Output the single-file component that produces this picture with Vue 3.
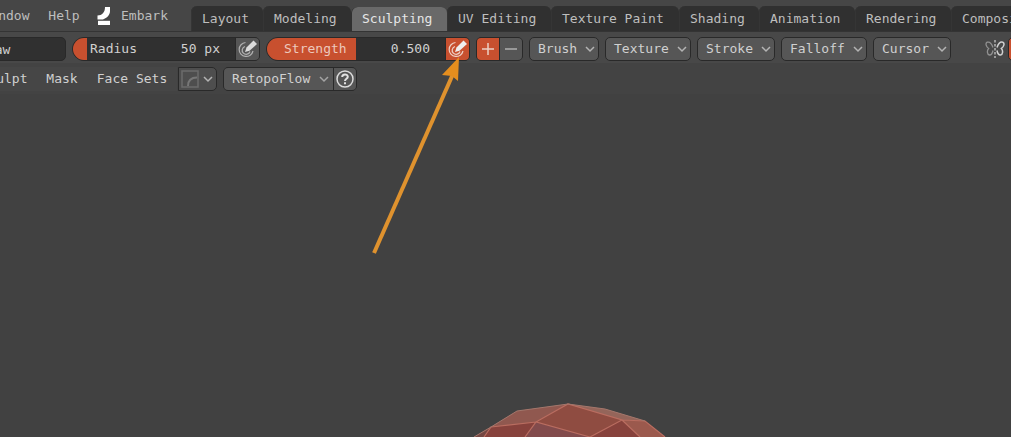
<script setup>
import { ref } from 'vue'

const menus = ['Window', 'Help']
const tabs = ['Layout', 'Modeling', 'Sculpting', 'UV Editing', 'Texture Paint', 'Shading', 'Animation', 'Rendering', 'Compositing']
const activeTab = ref('Sculpting')
const popovers = ['Brush', 'Texture', 'Stroke', 'Falloff', 'Cursor']
const modeMenus = ['Sculpt', 'Mask', 'Face Sets']

const brush = ref('Draw')
const radius = ref(50)
const strength = ref(0.5)
const direction = ref('add')

// One character cell of the interface font is 8px wide.
const cells = (label, extra) => ({ width: `${label.length * 8 + extra}px` })
</script>

<template>
  <div class="app">
    <header class="topbar">
      <nav class="menus" aria-label="Main menu">
        <button v-for="m in menus" :key="m" class="menu" type="button" :style="cells(m, 18)">{{ m }}</button>
        <button class="menu embark" type="button">
          <svg width="16" height="20" viewBox="0 0 16 20" aria-hidden="true">
            <path d="M9 1H14V5C14 9 11 12 7 13.5H1.500V9.500C6 9.500 9 6.500 9 1Z" fill="#fff" />
            <path d="M2 14.800H14V19H2Z" fill="#fff" />
          </svg>
          <span>Embark</span>
        </button>
      </nav>
      <div class="tabs" role="tablist" aria-label="Workspaces">
        <button
          v-for="t in tabs" :key="t" class="tab" type="button" role="tab"
          :class="{ active: t === activeTab }" :aria-selected="t === activeTab"
          :style="cells(t, 24)" @click="activeTab = t"
        >{{ t }}</button>
      </div>
    </header>

    <div class="toolbar tools" role="toolbar" aria-label="Brush settings">
      <input v-model="brush" class="brush-name" type="text" aria-label="Brush name">

      <div class="group">
        <div class="slider radius">
          <input id="radius" v-model.number="radius" type="range" min="0" max="550" :style="{ '--fill': '14px' }">
          <label for="radius">Radius</label>
          <output for="radius">{{ radius }} px</output>
        </div>
        <button class="cell" type="button" aria-label="Radius pressure">
          <svg width="22" height="22" viewBox="0 0 22 22" fill="none" aria-hidden="true">
            <path d="M8.500 4.500A7 7 0 1 0 16 13" stroke="currentColor" stroke-width="1.200" />
            <path d="M8 8.500A4 4 0 1 0 13 13.500" stroke="currentColor" stroke-width="1.300" />
            <path d="M8 14 9.500 9.500 16.500 2.500 20 6 12.500 12.800Z" fill="#dcdcdc" />
          </svg>
        </button>
      </div>

      <div class="group">
        <div class="slider strength">
          <input id="strength" v-model.number="strength" type="range" min="0" max="1" step="0.001" :style="{ '--fill': strength * 100 + '%' }">
          <label for="strength">Strength</label>
          <output for="strength">{{ strength.toFixed(3) }}</output>
        </div>
        <button class="cell on" type="button" aria-label="Strength pressure" aria-pressed="true">
          <svg width="22" height="22" viewBox="0 0 22 22" fill="none" aria-hidden="true">
            <path d="M8.500 4.500A7 7 0 1 0 16 13" stroke="currentColor" stroke-width="1.200" />
            <path d="M8 8.500A4 4 0 1 0 13 13.500" stroke="currentColor" stroke-width="1.300" />
            <path d="M8 14 9.500 9.500 16.500 2.500 20 6 12.500 12.800Z" fill="#eee" />
          </svg>
        </button>
      </div>

      <div class="group direction">
        <button class="cell" type="button" aria-label="Add" :class="{ on: direction === 'add' }" @click="direction = 'add'">
          <svg width="22" height="22" viewBox="0 0 22 22" aria-hidden="true"><path d="M5 11H17M11 5V17" stroke="currentColor" stroke-width="1.500" /></svg>
        </button>
        <button class="cell" type="button" aria-label="Subtract" :class="{ on: direction === 'subtract' }" @click="direction = 'subtract'">
          <svg width="22" height="22" viewBox="0 0 22 22" aria-hidden="true"><path d="M5 11H17" stroke="currentColor" stroke-width="1.500" /></svg>
        </button>
      </div>

      <button v-for="p in popovers" :key="p" class="popover" type="button" aria-haspopup="true" :style="cells(p, 30)">
        <span>{{ p }}</span>
        <svg width="10" height="8" viewBox="0 0 10 8" aria-hidden="true"><path d="M1 2 5 6 9 2" fill="none" stroke="#b4b4b4" stroke-width="1.500" /></svg>
      </button>

      <div class="symmetry">
        <svg width="20" height="20" viewBox="0 0 20 20" fill="none" aria-hidden="true">
          <path d="M8 8.500C6.800 5 4.500 2.500 2.200 3.200C0 4.200 1.200 8 3.600 9.500C1.800 11.500 2 15.500 4.500 16C7 16.200 7.600 13.500 8 11.500" stroke="#919191" stroke-width="1.300" />
          <path d="M12 8.500C13.200 5 15.500 2.500 17.800 3.200C20 4.200 18.800 8 16.400 9.500C18.200 11.500 18 15.500 15.500 16C13 16.200 12.400 13.500 12 11.500" stroke="#d0d0d0" stroke-width="1.500" />
          <path d="M10 1V19" stroke="#d0d0d0" stroke-width="1.200" stroke-dasharray="2.500 1.500" />
        </svg>
        <button class="axis" type="button" aria-label="Mirror X"></button>
      </div>
    </div>

    <div class="toolbar modes" role="toolbar" aria-label="Sculpt menus">
      <button v-for="m in modeMenus" :key="m" class="menu" type="button" :style="cells(m, 18)">{{ m }}</button>
      <button class="popover falloff" type="button" aria-label="Automasking" aria-haspopup="true">
        <svg width="20" height="20" viewBox="0 0 20 20" fill="none" aria-hidden="true">
          <path d="M2 2H18V18H2Z" stroke="#6c6c6c" stroke-width="1.500" />
          <path d="M8 17C8 11 11 8.500 17 8.500" stroke="#777" stroke-width="2" />
        </svg>
        <svg width="10" height="8" viewBox="0 0 10 8" aria-hidden="true"><path d="M1 2 5 6 9 2" fill="none" stroke="#b4b4b4" stroke-width="1.500" /></svg>
      </button>
      <div class="group retopo">
        <button class="cell wide" type="button" aria-haspopup="true">
          <span>RetopoFlow</span>
          <svg width="10" height="8" viewBox="0 0 10 8" aria-hidden="true"><path d="M1 2 5 6 9 2" fill="none" stroke="#a4a4a4" stroke-width="1.500" /></svg>
        </button>
        <button class="cell help" type="button" aria-label="Help">
          <svg width="20" height="20" viewBox="0 0 20 20" fill="none" aria-hidden="true">
            <circle cx="10" cy="10" r="8" stroke="#dcdcdc" stroke-width="1.500" />
            <path d="M7.200 8C7.200 4.600 12.800 4.600 12.800 7.800C12.800 9.800 10 9.800 10 12" stroke="#e2e2e2" stroke-width="2" />
            <path d="M9 13.200H11V15.200H9Z" fill="#e2e2e2" />
          </svg>
        </button>
      </div>
    </div>

    <main class="viewport">
      <svg class="mesh" width="194" height="34" viewBox="473 403 194 34" aria-label="Sculpted mesh">
        <path d="M474 437 491 427 517 411 568 404 605 409 645 421 665 437Z" fill="#87423c" />
        <path d="M491 427 517 411 568 404 536 422Z" fill="#90584f" />
        <path d="M568 404 622 420 590 437 536 422Z" fill="#8f4c41" />
        <path d="M568 404 605 409 645 421 622 420Z" fill="#94655a" />
        <path d="M622 420 645 421 665 437H640Z" fill="#9b594d" />
        <path d="M536 422 590 437H525Z" fill="#824b4c" />
        <path d="M474 437 491 427 484 437Z" fill="#754742" />
        <path d="M484 437 491 427 536 422 568 404 622 420 590 437 536 422 525 437M622 420 640 437M622 420 645 421 665 437" fill="none" stroke="#b96d60" stroke-width="1.200" />
        <path d="M474 437 491 427 517 411 568 404 605 409 645 421" fill="none" stroke="#a2776c" stroke-width="1" />
      </svg>
    </main>

    <svg class="pointer" width="90" height="200" viewBox="371 56 90 200" aria-hidden="true">
      <path d="M374 253 453 74" stroke="#df922e" stroke-width="4" />
      <path d="M459 57 458 81 452 76 442 75Z" fill="#e58e1e" />
    </svg>
  </div>
</template>

<style>
body {
  margin: 0;
  background: #414141;
}
</style>

<style scoped>
.app {
  position: relative;
  display: flex;
  flex-direction: column;
  min-height: 100vh;
  overflow: hidden;
  background: #414141;
  color: #d0d0d0;
  font: 13px/16px "DejaVu Sans Mono", monospace;
}

button,
input {
  box-sizing: border-box;
  margin: 0;
  padding: 0;
  border: 0;
  color: inherit;
  font: inherit;
  white-space: nowrap;
}

button {
  background: none;
}

svg {
  display: block;
  flex: none;
}

.topbar {
  display: flex;
  height: 32px;
  box-sizing: border-box;
  border-bottom: 1px solid #343434;
  background: #464646;
  color: #bebebe;
}

.menus {
  display: flex;
  flex: none;
  width: 218px;
  margin-left: -27px;
}

.menu {
  flex: none;
  text-align: center;
}

.embark {
  display: flex;
  align-items: center;
  gap: 9px;
  margin-left: 7px;
}

.tabs {
  display: flex;
  align-items: flex-end;
}

.tab {
  flex: none;
  height: 25px;
  padding-left: 11px;
  border-radius: 6px 6px 0 0;
  background: #303030;
  box-shadow: inset 1px 0 #353535;
  text-align: left;
}

.tab.active {
  height: 24px;
  background: #696969;
  box-shadow: inset 1px 0 #303030;
  color: #e6e6e6;
}

.toolbar {
  display: flex;
  align-items: center;
  box-sizing: border-box;
}

.tools {
  gap: 6px;
  height: 31px;
  padding-top: 3px;
  background: #484848;
}

.toolbar > * {
  flex: none;
}

.brush-name {
  width: 100px;
  height: 24px;
  margin-left: -34px;
  padding-left: 12px;
  border: 1px solid #292929;
  border-radius: 5px;
  background: #303030;
}

.group {
  display: flex;
  gap: 1px;
  height: 24px;
  box-sizing: border-box;
  border: 1px solid #292929;
  border-radius: 5px;
  background: #292929;
  overflow: hidden;
}

.group:has(.slider) {
  border-radius: 12px 5px 5px 12px;
}

.slider {
  display: grid;
  grid-template-columns: auto 1fr;
  align-items: center;
}

.slider > * {
  grid-row: 1;
}

.slider input {
  grid-column: 1 / -1;
  width: 100%;
  height: 22px;
  appearance: none;
  background: linear-gradient(to right, #c8502f var(--fill), #303030 var(--fill));
}

.slider input::-webkit-slider-thumb {
  appearance: none;
  width: 1px;
  height: 22px;
}

.slider label,
.slider output {
  pointer-events: none;
}

.slider label {
  grid-column: 1;
  padding-left: 17px;
}

.slider output {
  grid-column: 2;
  padding-right: 15px;
  text-align: right;
}

.radius {
  width: 162px;
}

.strength {
  width: 178px;
}

.strength label {
  color: #edc8bc;
}

.cell {
  display: flex;
  align-items: center;
  justify-content: center;
  width: 23px;
  height: 22px;
  background: #565656;
  color: #b0b0b0;
}

.cell.on {
  background: #c8502f;
  color: #edd0c5;
}

.direction .cell {
  width: 22px;
}

.direction {
  width: 47px;
}

.popover {
  display: flex;
  align-items: center;
  justify-content: space-between;
  height: 24px;
  padding: 0 3px 0 8px;
  border: 1px solid #292929;
  border-radius: 5px;
  background: #565656;
}

.symmetry {
  display: flex;
  gap: 3px;
  align-items: center;
  margin-left: 28px;
}

.axis {
  width: 24px;
  height: 24px;
  border: 1px solid #292929;
  border-radius: 5px 0 0 5px;
  background: #c8502f;
}

.modes {
  height: 31px;
  background: #434343;
}

.modes .menu {
  height: 24px;
  background: #464646;
}

.modes .menu:first-child {
  margin-left: -29px;
}

.modes .falloff {
  width: 39px;
  margin-left: 1px;
  padding-left: 1px;
  border-radius: 0 5px 5px 0;
  background: #4e4e4e;
}

.retopo {
  margin-left: 6px;
}

.cell.wide {
  justify-content: space-between;
  width: 109px;
  padding: 0 4px 0 8px;
  color: #d0d0d0;
}

.cell.help {
  width: 22px;
}

.viewport {
  display: flex;
  flex: 1;
  align-items: flex-end;
  justify-content: center;
}

.mesh {
  margin-left: 129px;
}

.pointer {
  position: absolute;
  top: 56px;
  left: 371px;
}
</style>
